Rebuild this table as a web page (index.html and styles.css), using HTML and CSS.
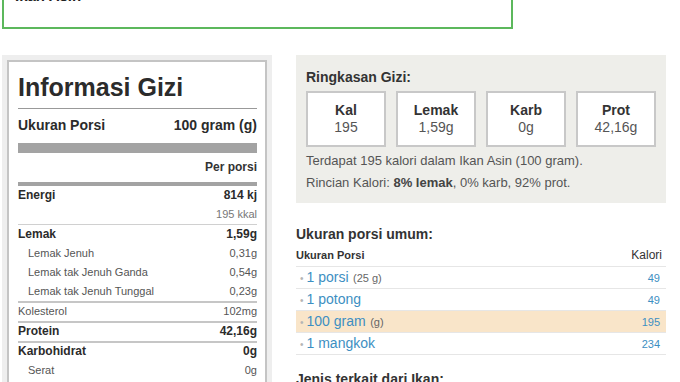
FILE: index.html
```html
<!DOCTYPE html>
<html lang="id">
<head>
<meta charset="utf-8">
<title>Ikan Asin</title>
<link rel="stylesheet" href="styles.css">
</head>
<body>
<div class="title-box"><h1 class="food-name">Ikan Asin</h1></div>
<div class="main">
  <div class="label-outer">
    <div class="label">
      <div class="lbl-title">Informasi Gizi</div>
      <div class="lbl-serving"><span>Ukuran Porsi</span><span>100 gram (g)</span></div>
      <div class="bar-thick"></div>
      <div class="lbl-per">Per porsi</div>
      <div class="bar-mid"></div>
      <div class="row b"><span>Energi</span><span>814 kj</span></div>
      <div class="row note"><span></span><span>195 kkal</span></div>
      <div class="row b sep"><span>Lemak</span><span>1,59g</span></div>
      <div class="row sub"><span>Lemak Jenuh</span><span>0,31g</span></div>
      <div class="row sub"><span>Lemak tak Jenuh Ganda</span><span>0,54g</span></div>
      <div class="row sub"><span>Lemak tak Jenuh Tunggal</span><span>0,23g</span></div>
      <div class="row plain sep2"><span>Kolesterol</span><span>102mg</span></div>
      <div class="row b sep2"><span>Protein</span><span>42,16g</span></div>
      <div class="row b sep2"><span>Karbohidrat</span><span>0g</span></div>
      <div class="row sub"><span>Serat</span><span>0g</span></div>
    </div>
  </div>
  <div class="side">
    <div class="summary">
      <div class="sum-title">Ringkasan Gizi:</div>
      <div class="sum-boxes">
        <div class="sum-box"><div class="sum-k">Kal</div><div class="sum-v">195</div></div>
        <div class="sum-box"><div class="sum-k">Lemak</div><div class="sum-v">1,59g</div></div>
        <div class="sum-box"><div class="sum-k">Karb</div><div class="sum-v">0g</div></div>
        <div class="sum-box"><div class="sum-k">Prot</div><div class="sum-v">42,16g</div></div>
      </div>
      <div class="sum-text">Terdapat 195 kalori dalam Ikan Asin (100 gram).</div>
      <div class="sum-text">Rincian Kalori: <b>8% lemak</b>, 0% karb, 92% prot.</div>
    </div>
    <div class="sec-title">Ukuran porsi umum:</div>
    <div class="portions">
      <div class="p-head"><span class="p-hl">Ukuran Porsi</span><span class="p-hr">Kalori</span></div>
      <div class="p-row"><span><span class="dot">•</span><a class="p-link">1 porsi</a> <span class="p-small">(25 g)</span></span><span class="p-num">49</span></div>
      <div class="p-row"><span><span class="dot">•</span><a class="p-link">1 potong</a></span><span class="p-num">49</span></div>
      <div class="p-row hl"><span><span class="dot">•</span><a class="p-link">100 gram</a> <span class="p-small">(g)</span></span><span class="p-num">195</span></div>
      <div class="p-row"><span><span class="dot">•</span><a class="p-link">1 mangkok</a></span><span class="p-num">234</span></div>
    </div>
    <div class="sec-title rel">Jenis terkait dari Ikan:</div>
  </div>
</div>
</body>
</html>
```

FILE: styles.css
```css
html, body {
  margin: 0;
  padding: 0;
  background: #fff;
  overflow: hidden;
}
body {
  width: 680px;
  height: 382px;
  font-family: "Liberation Sans", Arial, sans-serif;
  color: #333;
}
.title-box {
  margin: -20px 0 0 2px;
  width: 496px;
  height: 45px;
  border: 2px solid #5cb85c;
  padding: 0 0 0 11px;
  box-sizing: content-box;
}
.food-name {
  margin: 0;
  padding-top: 4px;
  font-size: 15px;
  line-height: 20px;
  font-weight: bold;
  color: #222;
}
.main {
  display: flex;
  gap: 24px;
  margin-top: 26px;
  padding-left: 2px;
}
.label-outer {
  width: 270px;
  height: 340px;
  background: #eeeeee;
  padding: 5px 0 0 5px;
  box-sizing: border-box;
}
.label {
  width: 260px;
  height: 330px;
  box-sizing: border-box;
  background: #fff;
  border: 2px solid #c4c4c4;
  border-bottom: none;
  padding: 10px 8px 0 9px;
}
.lbl-title {
  font-size: 25px;
  line-height: 30px;
  font-weight: bold;
  color: #2b2b2b;
  padding-bottom: 6px;
  border-bottom: 1px solid #999;
}
.lbl-serving {
  display: flex;
  justify-content: space-between;
  margin-top: 7px;
  font-size: 14px;
  line-height: 18px;
  font-weight: bold;
  color: #2b2b2b;
}
.bar-thick {
  height: 10px;
  margin-top: 9px;
  background: #a3a3a3;
}
.lbl-per {
  margin-top: 6px;
  text-align: right;
  font-size: 12px;
  line-height: 16px;
  font-weight: bold;
  color: #333;
}
.bar-mid {
  height: 4px;
  margin-top: 7px;
  background: #a3a3a3;
}
.row {
  display: flex;
  justify-content: space-between;
  font-size: 11px;
  line-height: 17px;
  padding: 1px 0;
  color: #555;
}
.row.b {
  font-size: 12px;
  font-weight: bold;
  color: #2b2b2b;
}
.row.note {
  color: #777;
}
.row.sub {
  padding-left: 10px;
}
.row.sep {
  border-top: 1px solid #d0d0d0;
}
.row.sep2 {
  border-top: 2px solid #c6c6c6;
  padding-top: 0;
}
.side {
  width: 370px;
}
.summary {
  background: #eeeeea;
  height: 148px;
  box-sizing: border-box;
  padding: 13px 10px 0 10px;
}
.sum-title {
  font-size: 14px;
  line-height: 18px;
  font-weight: bold;
  color: #333;
}
.sum-boxes {
  display: flex;
  gap: 10px;
  margin-top: 5px;
}
.sum-box {
  width: 80px;
  box-sizing: border-box;
  background: #fff;
  border: 2px solid #c8c8c8;
  padding: 9px 0;
  text-align: center;
  font-size: 14px;
  line-height: 17px;
}
.sum-k {
  font-weight: bold;
  color: #333;
}
.sum-v {
  color: #555;
}
.sum-text {
  font-size: 13px;
  line-height: 22px;
  color: #555;
}
.sum-boxes + .sum-text {
  margin-top: 3px;
}
.sum-text b {
  color: #444;
}
.sec-title {
  margin-top: 22px;
  font-size: 14px;
  line-height: 18px;
  font-weight: bold;
  color: #333;
}
.sec-title.rel {
  margin-top: 15px;
}
.portions {
  width: 370px;
}
.p-head {
  display: flex;
  justify-content: space-between;
  align-items: baseline;
  height: 23px;
  line-height: 24px;
  border-bottom: 1px solid #e6e6e6;
}
.p-hl {
  font-size: 11px;
  font-weight: bold;
  color: #333;
}
.p-hr {
  font-size: 12px;
  color: #333;
  padding-right: 4px;
}
.p-row {
  display: flex;
  justify-content: space-between;
  align-items: baseline;
  height: 21px;
  line-height: 20px;
  border-bottom: 1px solid #e6e6e6;
  padding: 0 6px 0 4px;
}
.p-row.hl {
  background: #f9e5c9;
}
.dot {
  color: #b5b5b5;
  font-size: 10px;
  margin-right: 3px;
}
.p-link {
  font-size: 14px;
  color: #3d8fc2;
}
.p-small {
  font-size: 11px;
  color: #666;
}
.p-num {
  font-size: 11px;
  color: #3d8fc2;
}
```
